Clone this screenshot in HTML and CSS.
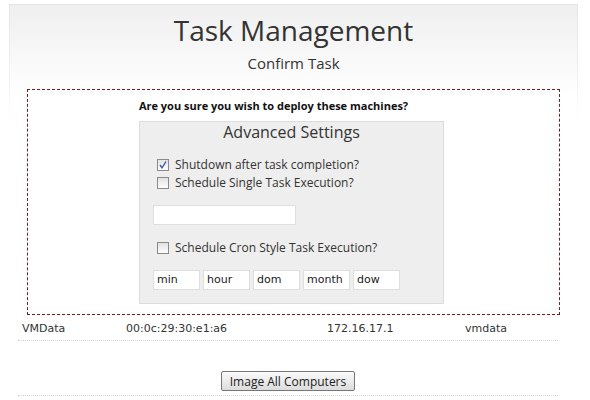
FILE: index.html
```html
<!DOCTYPE html>
<html>
<head>
<meta charset="utf-8">
<link rel="stylesheet" href="styles.css">
</head>
<body>
<div class="page">
  <div class="header">
    <h1 class="title">Task Management</h1>
    <h2 class="subtitle">Confirm Task</h2>
  </div>
  <div class="confirm">
    <p class="question">Are you sure you wish to deploy these machines?</p>
    <div class="settings">
      <h3 class="settings-title">Advanced Settings</h3>
      <label class="check first"><span class="box checked"><svg width="12" height="12" viewBox="0 0 12 12"><path d="M3 6 L5 8.8 L9 2.5" fill="none" stroke="#3553a8" stroke-width="1.3"/></svg></span>Shutdown after task completion?</label>
      <label class="check second"><span class="box"></span>Schedule Single Task Execution?</label>
      <div class="single"><span class="field wide"></span></div>
      <label class="check cron"><span class="box"></span>Schedule Cron Style Task Execution?</label>
      <div class="cron-fields">
        <span class="field">min</span>
        <span class="field">hour</span>
        <span class="field">dom</span>
        <span class="field">month</span>
        <span class="field">dow</span>
      </div>
    </div>
  </div>
  <div class="row">
    <span class="c1">VMData</span>
    <span class="c2">00:0c:29:30:e1:a6</span>
    <span class="c3">172.16.17.1</span>
    <span class="c4">vmdata</span>
  </div>
  <div class="actions">
    <button class="btn">Image All Computers</button>
  </div>
</div>
</body>
</html>
```

FILE: styles.css
```css
html, body {
  margin: 0;
  padding: 0;
  background: #fff;
}
body {
  font-family: "Open Sans", "Noto Sans", sans-serif;
  color: #333;
}
.page {
  margin: 4px 0 0 9px;
  width: 569px;
  border: 1px solid;
  border-image: linear-gradient(#e4e4e4, #f2f2f2 80px, #fff 120px) 1;
  border-bottom: 0;
  background: linear-gradient(#efefef, #fff 90px);
  height: 396px;
  box-sizing: border-box;
}
.header {
  text-align: center;
  padding-top: 8px;
}
.title {
  margin: 0;
  font-weight: normal;
  font-size: 28px;
  line-height: 34px;
  color: #333;
}
.subtitle {
  margin: 7px 0 0;
  font-weight: normal;
  font-size: 15px;
  line-height: 18px;
  color: #333;
}
.confirm {
  margin: 17px 0 0 17px;
  width: 533px;
  height: 226px;
  box-sizing: border-box;
  border: 1px dashed #7a1c1c;
}
.question {
  margin: 9px 0 0;
  padding-right: 40px;
  text-align: center;
  font-weight: bold;
  font-size: 11px;
  line-height: 14px;
  color: #111;
}
.settings {
  margin: 8px 0 0 111px;
  width: 305px;
  height: 183px;
  box-sizing: border-box;
  background: #eeeeee;
  border: 1px solid #dcdcdc;
  padding: 0 0 0 13px;
}
.settings-title {
  margin: 0;
  padding-right: 13px;
  text-align: center;
  font-weight: normal;
  font-size: 16px;
  line-height: 20px;
  color: #333;
}
.check {
  display: flex;
  align-items: center;
  gap: 6px;
  padding-left: 4px;
  font-size: 12px;
  line-height: 16px;
  color: #333;
}
.check.first {
  margin-top: 15px;
}
.check.second {
  margin-top: 2px;
}
.box {
  width: 12px;
  height: 12px;
  box-sizing: border-box;
  border: 1px solid #8a8a8a;
  background: linear-gradient(#e2e2e2, #fdfdfd);
  display: inline-block;
  position: relative;
}
.box svg {
  position: absolute;
  left: -1px;
  top: -1px;
}
.single {
  margin-top: 14px;
  display: flex;
}
.field {
  display: inline-block;
  height: 20px;
  box-sizing: border-box;
  background: #fff;
  border: 1px solid #dedede;
  font-family: "DejaVu Sans", sans-serif;
  font-size: 11px;
  line-height: 18px;
  padding-left: 3px;
  color: #222;
}
.field.wide {
  width: 143px;
}
.check.cron {
  margin-top: 15px;
}
.cron-fields {
  margin-top: 14px;
  display: flex;
  gap: 3px;
}
.cron-fields .field {
  width: 47px;
}
.row {
  margin: 6px 0 0 8px;
  width: 540px;
  display: flex;
  font-family: "DejaVu Sans", sans-serif;
  font-size: 11px;
  line-height: 16px;
  color: #333;
  padding-bottom: 3px;
  border-bottom: 1px dotted #d4d4d4;
}
.c1 { width: 104px; padding-left: 4px; }
.c2 { width: 201px; }
.c3 { width: 138px; }
.c4 { flex: 1; }
.actions {
  margin: 30px 0 0 8px;
  width: 540px;
  display: flex;
  justify-content: center;
  padding-bottom: 4px;
  border-bottom: 1px dotted #d4d4d4;
}
.btn {
  font-family: "Open Sans", sans-serif;
  font-size: 12px;
  line-height: 15px;
  color: #222;
  padding: 1px 8px;
  height: 20px;
  border: 1px solid #777;
  border-radius: 2px;
  background: linear-gradient(#fbfbfb, #dcdcdc);
}
```
